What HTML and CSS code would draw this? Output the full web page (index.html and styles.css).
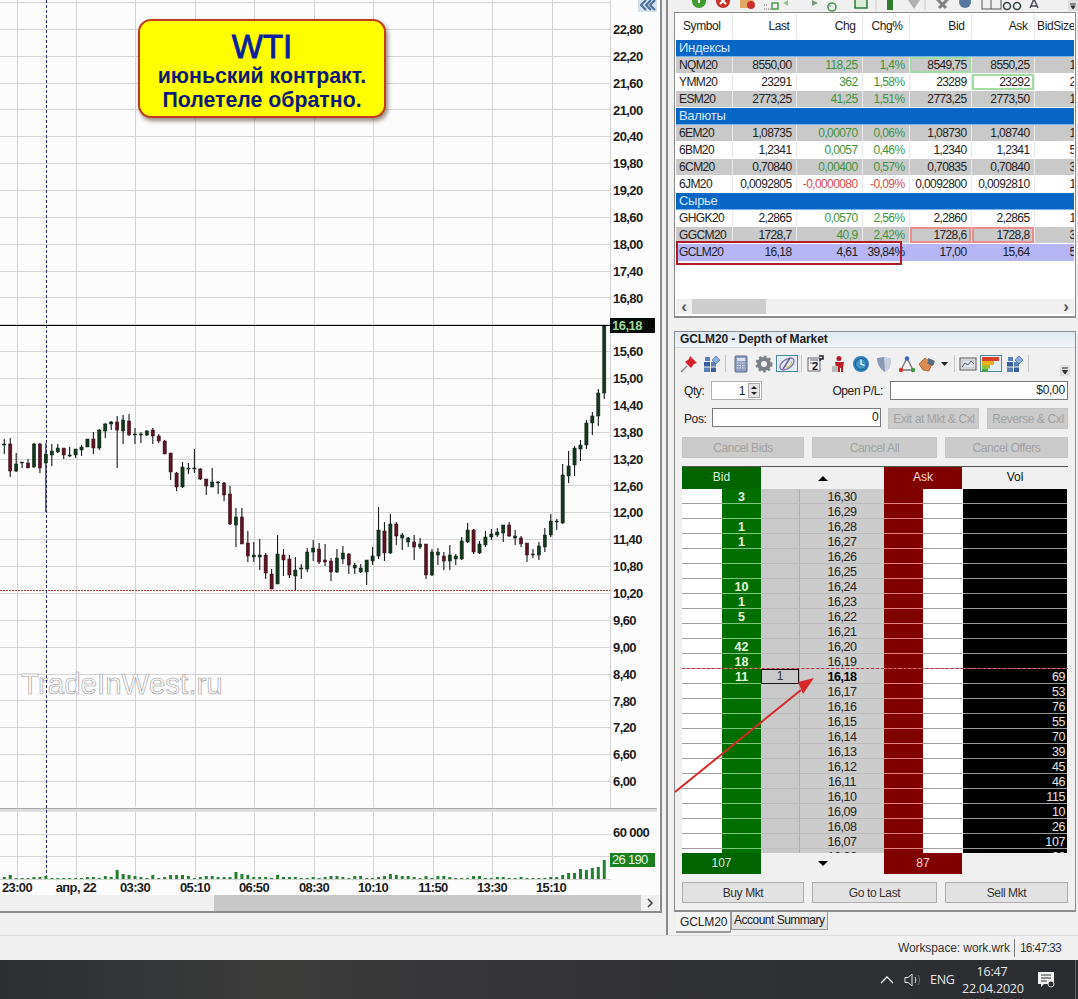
FILE: index.html
```html
<!DOCTYPE html>
<html lang="ru">
<head>
    <meta charset="UTF-8">
    <title>GCLM20 - Depth of Market</title>
    <link rel="stylesheet" href="styles.css">
</head>
<body>

<div class="workspace">

    <!-- chart, drawn by chart.js -->
    <div class="chart-panel">
        <svg id="chart" class="chart" width="659" height="912"></svg>
        <div class="note">
            <div class="note-big">WTI</div>
            <div>июньский контракт.</div>
            <div>Полетеле обратно.</div>
        </div>
        <div class="collapse">
            <svg width="18" height="11" viewBox="0 0 18 11"><path d="M8 0 L3 5 L8 10 M13 0 L8 5 L13 10 M17 0 L12 5 L17 10" fill="none" stroke="#4a6f9c" stroke-width="2"/></svg>
        </div>
    </div>

    <div class="side">

        <svg class="top-tools" width="410" height="12" viewBox="0 0 410 12">
            <circle cx="27" cy="1" r="7" fill="#3f9a2f"/><path d="M27 -3v6" stroke="#fff" stroke-width="2"/>
            <circle cx="51" cy="1" r="7" fill="#c8302a"/><path d="M48 -2l6 6M54 -2l-6 6" stroke="#fff" stroke-width="2"/>
            <rect x="68" y="-3" width="13" height="11" fill="#e0a860"/><circle cx="79" cy="5" r="4" fill="#c8302a"/>
            <path d="M92 9h10M92 5h3" stroke="#666" stroke-dasharray="1 1"/><rect x="100" y="3" width="6" height="6" fill="none" stroke="#4a9a4a" stroke-width="1.5"/>
            <path d="M116 0l-5 3 5 3z" fill="#8fc48f"/>
            <path d="M140 0l6 3-6 3z" fill="#7c9a7c"/>
            <circle cx="160" cy="7" r="4" fill="none" stroke="#4a9a4a" stroke-width="1.6"/><path d="M155 6h4" stroke="#88a"/>
            <rect x="183" y="-1" width="12" height="9" fill="#d8ecd8" stroke="#2a7a3a" stroke-width="1.5"/>
            <path d="M204 0v11" stroke="#c8c8c8"/>
            <rect x="215" y="-2" width="6" height="12" fill="#2f7a2f"/>
            <path d="M236 0h12l-6 9z" fill="#b0b0b0"/>
            <path d="M253 0v11" stroke="#c8c8c8"/>
            <path d="M265 -1l9 9M276 -1l-9 9" stroke="#808080" stroke-width="3"/>
            <circle cx="293" cy="2" r="6" fill="#5878a0"/>
            <rect x="310" y="-2" width="19" height="11" fill="none" stroke="#555"/><path d="M319 -2v11" stroke="#555"/>
            <circle cx="335" cy="6" r="3.5" fill="none" stroke="#344" stroke-width="1.6"/><circle cx="345" cy="6" r="3.5" fill="none" stroke="#344" stroke-width="1.6"/>
            <path d="M358 8l4-9 4 9M359 6h6" fill="none" stroke="#445" stroke-width="1.4"/>
            <rect x="396" y="0" width="10" height="11" fill="#ddd"/><path d="M398 4h6M399 6l2 3 2-3z" stroke="#333" fill="#333"/>
        </svg>

        <div class="quotes">
            <div class="quotes-body">
                <table class="quote-table">
                    <colgroup>
                        <col class="col-sym"><col class="col-last"><col class="col-chg"><col class="col-pct"><col class="col-bid"><col class="col-ask"><col class="col-size">
                    </colgroup>
                    <tr class="head"><th class="left">Symbol</th><th>Last</th><th>Chg</th><th>Chg%</th><th>Bid</th><th>Ask</th><th class="size-head">BidSize</th></tr>
                    <tr class="group"><td colspan="7">Индексы</td></tr>
                    <tr class="odd"><td class="left">NQM20</td><td>8550,00</td><td class="up">118,25</td><td class="up">1,4%</td><td class="hl-green">8549,75</td><td>8550,25</td><td class="size">1</td></tr>
                    <tr><td class="left">YMM20</td><td>23291</td><td class="up">362</td><td class="up">1,58%</td><td>23289</td><td class="hl-green">23292</td><td class="size">2</td></tr>
                    <tr class="odd"><td class="left">ESM20</td><td>2773,25</td><td class="up">41,25</td><td class="up">1,51%</td><td>2773,25</td><td>2773,50</td><td class="size">17</td></tr>
                    <tr class="group"><td colspan="7">Валюты</td></tr>
                    <tr class="odd"><td class="left">6EM20</td><td>1,08735</td><td class="up">0,00070</td><td class="up">0,06%</td><td>1,08730</td><td>1,08740</td><td class="size">10</td></tr>
                    <tr><td class="left">6BM20</td><td>1,2341</td><td class="up">0,0057</td><td class="up">0,46%</td><td>1,2340</td><td>1,2341</td><td class="size">5</td></tr>
                    <tr class="odd"><td class="left">6CM20</td><td>0,70840</td><td class="up">0,00400</td><td class="up">0,57%</td><td>0,70835</td><td>0,70840</td><td class="size">3</td></tr>
                    <tr><td class="left">6JM20</td><td>0,0092805</td><td class="down">-0,0000080</td><td class="down">-0,09%</td><td>0,0092800</td><td>0,0092810</td><td class="size">14</td></tr>
                    <tr class="group"><td colspan="7">Сырье</td></tr>
                    <tr><td class="left">GHGK20</td><td>2,2865</td><td class="up">0,0570</td><td class="up">2,56%</td><td>2,2860</td><td>2,2865</td><td class="size">17</td></tr>
                    <tr class="odd"><td class="left">GGCM20</td><td>1728,7</td><td class="up">40,9</td><td class="up">2,42%</td><td class="hl-red">1728,6</td><td class="hl-red">1728,8</td><td class="size">3</td></tr>
                    <tr class="sel"><td class="left">GCLM20</td><td>16,18</td><td>4,61</td><td>39,84%</td><td>17,00</td><td>15,64</td><td class="size">5</td></tr>
                </table>
                <div class="sel-mark"></div>
                <div class="hscroll">
                    <span class="arrow">‹</span>
                    <div class="hscroll-track"><div class="hscroll-thumb"></div></div>
                    <span class="arrow">›</span>
                </div>
            </div>
        </div>

        <div class="dom">
            <div class="dom-title">GCLM20 - Depth of Market</div>

            <div class="dom-tools">
                <svg class="tool" width="18" height="18" viewBox="0 0 18 18"><path d="M1 17l6-6" stroke="#888" stroke-width="1.5"/><path d="M10 1l7 7-3 1-3 4-6-6 4-3z" fill="#d8222a"/><path d="M11 2l5 5" stroke="#f08080"/></svg>
                <svg class="tool" width="18" height="18" viewBox="0 0 18 18"><use href="#blocks"/></svg>
                <span class="tool-sep"></span>
                <svg class="tool" width="18" height="18" viewBox="0 0 18 18"><rect x="3" y="1" width="12" height="16" rx="1" fill="#8f9fc0" stroke="#5a6a8a"/><rect x="5" y="3" width="8" height="3" fill="#dde"/><path d="M5 8h8M5 10.500h8M5 13h8" stroke="#e8e8f4" stroke-dasharray="1.500 1"/></svg>
                <svg class="tool" width="18" height="18" viewBox="0 0 18 18"><circle cx="9" cy="9" r="5" fill="none" stroke="#7a7f88" stroke-width="4"/><circle cx="9" cy="9" r="7.500" fill="none" stroke="#7a7f88" stroke-width="2" stroke-dasharray="2.500 2.500"/></svg>
                <span class="tool-on"><svg width="18" height="16" viewBox="0 0 18 16"><ellipse cx="9" cy="8" rx="8" ry="4.500" fill="none" stroke="#8a78b8" stroke-width="1.500" transform="rotate(-35 9 8)"/><path d="M5 13L12 2" stroke="#6a58a0" stroke-width="1.500"/><path d="M8 11c3 0 5-2 6-6" fill="none" stroke="#c8b030"/></svg></span>
                <span class="tool-sep tool-sep-tight"></span>
                <svg class="tool" width="18" height="18" viewBox="0 0 18 18"><rect x="2" y="3" width="12" height="13" fill="#f4f4f4" stroke="#667"/><path d="M4 5h8M4 8h8" stroke="#667"/><text class="tool-num" x="6" y="15">2</text><path d="M13 1h4v3h-3v2" fill="none" stroke="#223" stroke-width="1.500"/></svg>
                <svg class="tool" width="18" height="18" viewBox="0 0 18 18"><circle cx="10" cy="3.500" r="2.500" fill="#b02028"/><path d="M6 7h9l-1 6H7z" fill="#b82028"/><path d="M3 11h6v6H3z" fill="#bbb"/><path d="M10 13v4M13 13v4" stroke="#b02028" stroke-width="2"/></svg>
                <svg class="tool" width="18" height="18" viewBox="0 0 18 18"><circle cx="9" cy="9" r="8" fill="#2f7fb8"/><circle cx="9" cy="9" r="5.500" fill="#3f95cc" stroke="#1a5a8a"/><path d="M9 4.500V9l3.500 1.500" fill="none" stroke="#fff" stroke-width="1.300"/></svg>
                <svg class="tool" width="18" height="18" viewBox="0 0 18 18"><path d="M2 3l7-1 7 2c0 6-2 10-6 13C5 14 2 9 2 3z" fill="#8a9ab4"/><path d="M9 2l7 2c0 6-2 10-6 13z" fill="#c6d0de"/></svg>
                <svg class="tool" width="18" height="18" viewBox="0 0 18 18"><path d="M9 3L3 15h12z" fill="none" stroke="#777" stroke-width="1.300"/><circle cx="9" cy="3.500" r="2.200" fill="#3a66c0"/><circle cx="3" cy="15" r="2.200" fill="#d03030"/><circle cx="15" cy="15" r="2.200" fill="#3a9a3a"/></svg>
                <svg class="tool tool-hand" width="18" height="18" viewBox="0 0 18 18"><path d="M1 9l6-6 4 3-2 2 5 1-3 7-6-1z" fill="#d88a50" stroke="#a05020" stroke-width=".7"/><path d="M10 3l7 3-2 5-5-2z" fill="#5a6a80"/></svg>
                <svg class="tool-caret" width="7" height="4" viewBox="0 0 7 4"><path d="M0 0h7L3.500 4z" fill="#222"/></svg>
                <span class="tool-sep tool-sep-tight"></span>
                <svg class="tool" width="18" height="18" viewBox="0 0 18 18"><rect x="1" y="3" width="16" height="12" fill="#eee" stroke="#555"/><rect x="3" y="5" width="12" height="8" fill="#dfe4ee" stroke="#999" stroke-width=".5"/><path d="M3 12l3-4 3 2 3-4 3 3" fill="none" stroke="#555"/></svg>
                <span class="tool-on"><svg width="18" height="16" viewBox="0 0 18 16"><rect x="0" y="1" width="17" height="4" fill="#d8402a"/><rect x="0" y="5" width="12" height="4" fill="#e8b020"/><rect x="0" y="9" width="8" height="3.500" fill="#9ac030"/><rect x="0" y="12.500" width="6" height="3" fill="#48a838"/></svg></span>
                <svg class="tool" width="18" height="18" viewBox="0 0 18 18" id="last-blocks">
                    <defs>
                        <g id="blocks">
                            <rect x="1" y="7" width="6" height="4.500" fill="#3a5e9c"/><rect x="8" y="7" width="5" height="4.500" fill="#5a80b8"/>
                            <rect x="1" y="12.500" width="6" height="4.500" fill="#5a80b8"/><rect x="8" y="12.500" width="5" height="4.500" fill="#3a5e9c"/>
                            <rect x="2" y="2" width="5" height="4" fill="#5a80b8"/>
                            <path d="M13 1l4 4-4 4-4-4z" fill="#8ab0e0" stroke="#39598c" stroke-width=".6"/>
                        </g>
                    </defs>
                    <use href="#blocks"/>
                </svg>
                <span class="tool-sep"></span>
                <span class="tool-more"><svg width="10" height="11" viewBox="0 0 10 11"><path d="M2 3h6M2.500 5.500L5 9l2.500-3.500z" stroke="#333" fill="#333"/></svg></span>
            </div>

            <div class="form-row row-qty">
                <label class="lbl">Qty:</label>
                <div class="spin">
                    <span class="spin-val">1</span>
                    <span class="spin-btns"><i class="tri-up"></i><i class="tri-down"></i></span>
                </div>
                <label class="lbl lbl-pl">Open P/L:</label>
                <div class="field field-pl">$0,00</div>
            </div>

            <div class="form-row row-pos">
                <label class="lbl lbl-pos">Pos:</label>
                <div class="field field-pos">0</div>
                <button class="btn off btn-exit">Exit at Mkt &amp; Cxl</button>
                <button class="btn off btn-rev">Reverse &amp; Cxl</button>
            </div>

            <div class="btn-row row-cancel">
                <button class="btn off">Cancel Bids</button>
                <button class="btn off">Cancel All</button>
                <button class="btn off">Cancel Offers</button>
            </div>

            <div class="ladder">
                <div class="ladder-line ladder-head">
                    <span class="h-bid">Bid</span>
                    <span class="h-mid"><i class="big-up"></i></span>
                    <span class="h-ask">Ask</span>
                    <span class="h-vol">Vol</span>
                </div>
                <div class="ladder-rows">
                    <div class="lr"><span class="bw"></span><span class="bq">3</span><span class="my"></span><span class="pr">16,30</span><span class="aq"></span><span class="aw"></span><span class="vo"></span></div>
                    <div class="lr"><span class="bw"></span><span class="bq"></span><span class="my"></span><span class="pr">16,29</span><span class="aq"></span><span class="aw"></span><span class="vo"></span></div>
                    <div class="lr"><span class="bw"></span><span class="bq">1</span><span class="my"></span><span class="pr">16,28</span><span class="aq"></span><span class="aw"></span><span class="vo"></span></div>
                    <div class="lr"><span class="bw"></span><span class="bq">1</span><span class="my"></span><span class="pr">16,27</span><span class="aq"></span><span class="aw"></span><span class="vo"></span></div>
                    <div class="lr"><span class="bw"></span><span class="bq"></span><span class="my"></span><span class="pr">16,26</span><span class="aq"></span><span class="aw"></span><span class="vo"></span></div>
                    <div class="lr"><span class="bw"></span><span class="bq"></span><span class="my"></span><span class="pr">16,25</span><span class="aq"></span><span class="aw"></span><span class="vo"></span></div>
                    <div class="lr"><span class="bw"></span><span class="bq">10</span><span class="my"></span><span class="pr">16,24</span><span class="aq"></span><span class="aw"></span><span class="vo"></span></div>
                    <div class="lr"><span class="bw"></span><span class="bq">1</span><span class="my"></span><span class="pr">16,23</span><span class="aq"></span><span class="aw"></span><span class="vo"></span></div>
                    <div class="lr"><span class="bw"></span><span class="bq">5</span><span class="my"></span><span class="pr">16,22</span><span class="aq"></span><span class="aw"></span><span class="vo"></span></div>
                    <div class="lr"><span class="bw"></span><span class="bq"></span><span class="my"></span><span class="pr">16,21</span><span class="aq"></span><span class="aw"></span><span class="vo"></span></div>
                    <div class="lr"><span class="bw"></span><span class="bq">42</span><span class="my"></span><span class="pr">16,20</span><span class="aq"></span><span class="aw"></span><span class="vo"></span></div>
                    <div class="lr"><span class="bw"></span><span class="bq">18</span><span class="my"></span><span class="pr">16,19</span><span class="aq"></span><span class="aw"></span><span class="vo"></span></div>
                    <div class="lr lr-last"><span class="bw"></span><span class="bq">11</span><span class="my my-box">1</span><span class="pr">16,18</span><span class="aq"></span><span class="aw"></span><span class="vo">69</span></div>
                    <div class="lr"><span class="bw"></span><span class="bq"></span><span class="my"></span><span class="pr">16,17</span><span class="aq"></span><span class="aw"></span><span class="vo">53</span></div>
                    <div class="lr"><span class="bw"></span><span class="bq"></span><span class="my"></span><span class="pr">16,16</span><span class="aq"></span><span class="aw"></span><span class="vo">76</span></div>
                    <div class="lr"><span class="bw"></span><span class="bq"></span><span class="my"></span><span class="pr">16,15</span><span class="aq"></span><span class="aw"></span><span class="vo">55</span></div>
                    <div class="lr"><span class="bw"></span><span class="bq"></span><span class="my"></span><span class="pr">16,14</span><span class="aq"></span><span class="aw"></span><span class="vo">70</span></div>
                    <div class="lr"><span class="bw"></span><span class="bq"></span><span class="my"></span><span class="pr">16,13</span><span class="aq"></span><span class="aw"></span><span class="vo">39</span></div>
                    <div class="lr"><span class="bw"></span><span class="bq"></span><span class="my"></span><span class="pr">16,12</span><span class="aq"></span><span class="aw"></span><span class="vo">45</span></div>
                    <div class="lr"><span class="bw"></span><span class="bq"></span><span class="my"></span><span class="pr">16,11</span><span class="aq"></span><span class="aw"></span><span class="vo">46</span></div>
                    <div class="lr"><span class="bw"></span><span class="bq"></span><span class="my"></span><span class="pr">16,10</span><span class="aq"></span><span class="aw"></span><span class="vo">115</span></div>
                    <div class="lr"><span class="bw"></span><span class="bq"></span><span class="my"></span><span class="pr">16,09</span><span class="aq"></span><span class="aw"></span><span class="vo">10</span></div>
                    <div class="lr"><span class="bw"></span><span class="bq"></span><span class="my"></span><span class="pr">16,08</span><span class="aq"></span><span class="aw"></span><span class="vo">26</span></div>
                    <div class="lr"><span class="bw"></span><span class="bq"></span><span class="my"></span><span class="pr">16,07</span><span class="aq"></span><span class="aw"></span><span class="vo">107</span></div>
                    <div class="lr"><span class="bw"></span><span class="bq"></span><span class="my"></span><span class="pr">16,06</span><span class="aq"></span><span class="aw"></span><span class="vo">98</span></div>
                </div>
                <div class="ladder-line ladder-foot">
                    <span class="h-bid">107</span>
                    <span class="h-mid"><i class="big-down"></i></span>
                    <span class="h-ask">87</span>
                    <span class="h-vol"></span>
                </div>
            </div>

            <div class="btn-row row-trade">
                <button class="btn">Buy Mkt</button>
                <button class="btn">Go to Last</button>
                <button class="btn">Sell Mkt</button>
            </div>
        </div>

        <div class="tabs">
            <span class="tab tab-on">GCLM20</span>
            <span class="tab">Account Summary</span>
        </div>
    </div>
</div>

<div class="statusbar">
    <span class="status-work">Workspace: work.wrk</span>
    <span class="status-time">16:47:33</span>
</div>

<div class="taskbar">
    <svg class="tray-up" width="14" height="8" viewBox="0 0 14 8"><path d="M1 7l6-6 6 6" fill="none" stroke="#fff" stroke-width="1.300"/></svg>
    <svg class="tray-vol" width="18" height="16" viewBox="0 0 18 16"><path d="M1 5.500h3L8 2v12L4 10.500H1z" fill="none" stroke="#eee"/><path d="M11 5c1 2 1 4 0 6" fill="none" stroke="#eee"/><path d="M14 3c2 3 2 7 0 10" fill="none" stroke="#777"/></svg>
    <span class="tray-lang">ENG</span>
    <div class="tray-clock"><div>16:47</div><div>22.04.2020</div></div>
    <svg class="tray-note" width="18" height="17" viewBox="0 0 18 17"><path d="M1 1h16v12H7l-3 3v-3H1z" fill="#f4f4f4"/><path d="M4 4h10M4 7h10M4 10h6" stroke="#333"/><circle cx="14" cy="13" r="3" fill="#2d2d2f" stroke="#ddd"/></svg>
    <span class="tray-edge"></span>
</div>

<!-- red arrow drawn over the ladder -->
<svg class="pointer" width="160" height="130" viewBox="0 0 160 130">
    <path d="M5 122L131 20" stroke="#d62a2a" stroke-width="2"/>
    <path d="M144 8L128 12L133 24z" fill="#d62a2a"/>
</svg>

<script src="chart.js"></script>
</body>
</html>
```

FILE: styles.css
```css
/* General */
* {
    box-sizing: border-box;
}

body {
    margin: 0;
    width: 1078px;
    height: 999px;
    overflow: hidden;
    position: relative;
    display: flex;
    flex-direction: column;
    font-family: "Liberation Sans", Arial, sans-serif;
    font-size: 12px;
    color: #222;
    background-color: #f0f0f0;
}

.workspace {
    display: flex;
    height: 936px;
    border-bottom: 1px solid #dcdcdc;
}

/* Chart */
.chart-panel {
    position: relative;
    width: 662px;
    height: 913px;
    border-right: 2px solid #8a8a8a;
    border-bottom: 2px solid #8a8a8a;
    background-color: #fcfcfc;
}

.chart {
    display: block;
}

.chart .grid {
    stroke: #d4d4d4;
    stroke-width: 1;
}

.chart .wick {
    stroke: #14181a;
    stroke-width: 1.1;
}

.chart .up {
    fill: #12381c;
    stroke: #0c2012;
    stroke-width: .5;
}

.chart .down {
    fill: #5c1420;
    stroke: #30101a;
    stroke-width: .5;
}

.chart .vol {
    fill: #22802e;
}

.chart .axis {
    font-size: 13px;
    font-weight: bold;
    letter-spacing: -.6px;
    fill: #1c1c1c;
}

.chart .tag-text {
    font-weight: bold;
    font-size: 13px;
    letter-spacing: -.5px;
    fill: #9ad89a;
}

.chart .vol-text {
    font-size: 13px;
    letter-spacing: -.7px;
    fill: #e8f8e8;
}

.chart .mark {
    font-size: 29.500px;
    fill: #fcfcfc;
    stroke: #9a9a9a;
    stroke-width: .6;
}

.note {
    position: absolute;
    left: 138px;
    top: 19px;
    width: 248px;
    height: 99px;
    padding-top: 9px;
    border: 2px solid #c23a1c;
    border-radius: 13px;
    background-color: #ffff00;
    box-shadow: 2px 3px 4px rgba(80, 60, 40, .6);
    text-align: center;
    font-size: 21.300px;
    line-height: 24px;
    font-weight: bold;
    color: #0c1a78;
}

.note-big {
    font-size: 33px;
    line-height: 34px;
    font-weight: normal;
    -webkit-text-stroke: .9px #0a1fa0;
    color: #0a1fa0;
}

.collapse {
    position: absolute;
    left: 638px;
    top: 0;
    width: 19px;
    height: 12px;
    background-color: #d4e0ee;
}

/* Right side */
.side {
    width: 412px;
    margin-left: 4px;
    padding-left: 6px;
    border-left: 2px solid #8a8a8a;
    display: flex;
    flex-direction: column;
}

.top-tools {
    display: block;
    flex: none;
    margin-left: -2px;
}

.quotes {
    width: 402px;
    height: 306px;
    padding: 1px;
    border: 1px solid #8c8c8c;
    border-bottom-width: 2px;
    background-color: #fff;
}

.quotes-body {
    position: relative;
    height: 100%;
    display: flex;
    flex-direction: column;
    justify-content: space-between;
    overflow: hidden;
}

.quote-table {
    table-layout: fixed;
    width: 399px;
    border-collapse: collapse;
    font-size: 12px;
    letter-spacing: -.6px;
}

.col-sym { width: 56px; }
.col-last { width: 64px; }
.col-chg { width: 66px; }
.col-pct { width: 47px; }
.col-bid { width: 62px; }
.col-ask { width: 63px; }
.col-size { width: 41px; }

.quote-table td,
.quote-table th {
    height: 17px;
    padding: 0 4px 0 3px;
    text-align: right;
    white-space: nowrap;
    overflow: hidden;
    font-weight: normal;
    border-right: 1px solid #e8e8e8;
    border-bottom: 1px solid #fff;
}

.quote-table th {
    height: 25px;
    padding-right: 6px;
    font-size: 12px;
    letter-spacing: -.4px;
    background-color: #fff;
    border-right: 1px solid #e6e6e6;
}

.quote-table .left {
    text-align: left;
}

.quote-table th.left {
    padding-left: 7px;
}

.quote-table .size-head {
    padding: 0;
    border-right: none;
}

.quote-table .size {
    padding: 0 0 0 35px;
    text-align: left;
}

.quote-table .group td {
    text-align: left;
    font-size: 13px;
    letter-spacing: -.3px;
    color: #d4e8ff;
    background-color: #0866c6;
    border-right: none;
    border-bottom: 1px solid #7ab4ea;
}

.quote-table .odd td {
    background-color: #c9c9c9;
}

.quote-table .up {
    color: #3c9440;
}

.quote-table .down {
    color: #d84848;
}

.quote-table .sel td {
    background-color: #b6b6f6;
    border-color: #b6b6f6;
}

.quote-table td.hl-green {
    box-shadow: inset 0 0 0 2px #a2dca2;
}

.quote-table td.hl-red {
    box-shadow: inset 0 0 0 2px #e88c8c;
}

.sel-mark {
    position: absolute;
    left: 0;
    top: 227px;
    width: 226px;
    height: 24px;
    border: 2px solid #b01c28;
}

.hscroll {
    display: flex;
    align-items: center;
    height: 15px;
    margin-bottom: 1px;
    background-color: #f0f0f0;
    color: #555;
}

.arrow {
    width: 16px;
    text-align: center;
    font-size: 17px;
    line-height: 13px;
    font-weight: bold;
}

.hscroll-track {
    flex: 1;
    height: 100%;
}

.hscroll-thumb {
    width: 74px;
    height: 100%;
    background-color: #cdcdcd;
}

/* Depth of market */
.dom {
    width: 402px;
    height: 581px;
    margin-top: 13px;
    border: 1px solid #8c8c8c;
    border-bottom-width: 2px;
    background-color: #f0f0f0;
}

.dom-title {
    height: 16px;
    padding-left: 5px;
    font-weight: bold;
    font-size: 12px;
    letter-spacing: -.1px;
    line-height: 15px;
    background: linear-gradient(to bottom, #e0eaf2, #f0f4f8);
    border-bottom: 1px solid #d0d8e0;
}

.dom-tools {
    display: flex;
    align-items: center;
    height: 25px;
    margin-top: 3px;
    padding-left: 5px;
    position: relative;
}

.tool {
    flex: none;
    width: 18px;
    margin-right: 5px;
}

.tool-num {
    font-size: 11px;
    font-weight: bold;
    fill: #223;
}

.tool-sep {
    flex: none;
    width: 1px;
    height: 17px;
    margin: 0 6px 0 -1px;
    background-color: #c4c4c4;
}

.tool-sep-tight {
    margin-right: 4px;
}

.tool-hand {
    margin-left: -3px;
    margin-right: 7px;
}

.tool-on {
    flex: none;
    display: flex;
    align-items: center;
    justify-content: center;
    width: 22px;
    height: 17px;
    margin: 0 4px 0 -2px;
    border: 1px solid #4a8a9a;
    background-color: #e4eef2;
}

.tool-caret {
    flex: none;
    margin: 0 7px 0 -2px;
}

.tool-more {
    position: absolute;
    right: 5px;
    bottom: 0;
    width: 10px;
    height: 11px;
    background-color: #e0e0e0;
}

.form-row {
    display: flex;
    align-items: center;
    height: 19px;
    padding-left: 9px;
}

.row-qty {
    margin-top: 5px;
}

.row-pos {
    margin-top: 8px;
    height: 21px;
}

.lbl {
    color: #222;
    font-size: 12px;
    letter-spacing: -.4px;
}

.spin {
    display: flex;
    justify-content: flex-end;
    align-items: center;
    width: 51px;
    height: 19px;
    margin-left: 7px;
    padding-right: 1px;
    border: 1px solid #b0b0b0;
    background-color: #fff;
}

.spin-val {
    margin-right: 3px;
}

.spin-btns {
    display: flex;
    flex-direction: column;
    width: 12px;
    height: 15px;
    background-color: #e4e4e4;
    border: 1px solid #aaa;
    align-items: center;
    justify-content: space-around;
}

.tri-up {
    border: 3px solid transparent;
    border-top: 0;
    border-bottom: 3px solid #222;
}

.tri-down {
    border: 3px solid transparent;
    border-bottom: 0;
    border-top: 3px solid #222;
}

.lbl-pl {
    margin-left: 70px;
}

.field {
    height: 19px;
    padding-right: 2px;
    text-align: right;
    line-height: 16px;
    font-size: 12px;
    letter-spacing: -.3px;
    border: 1px solid #7a7a7a;
    background-color: #fff;
}

.field-pl {
    width: 178px;
    margin-left: 7px;
}

.field-pos {
    width: 169px;
    margin: -2px 0 0 6px;
}

.btn {
    height: 21px;
    padding: 0;
    font-family: inherit;
    font-size: 12px;
    letter-spacing: -.4px;
    color: #333;
    background-color: #e2e2e2;
    border: 1px solid #adadad;
}

.btn.off {
    color: #a2a2a2;
    background-color: #cbcbcb;
    border-color: #c4c4c4;
}

.btn-exit {
    width: 91px;
    margin-left: 7px;
}

.btn-rev {
    width: 81px;
    margin-left: 8px;
}

.btn-row {
    display: grid;
    grid-template-columns: 122px 125px 123px;
    column-gap: 8px;
    padding-left: 7px;
}

.row-cancel {
    margin-top: 8px;
}

.row-trade {
    margin-top: 8px;
}

.ladder {
    width: 386px;
    margin: 8px 0 0 7px;
    border-top: 1px solid #555;
}

.ladder-line {
    display: grid;
    grid-template-columns: 79px 123px 78px 106px;
    height: 21px;
    text-align: center;
    line-height: 21px;
}

.ladder-head {
    height: 22px;
}

.h-bid {
    background-color: #006400;
    color: #d8f0d8;
}

.h-ask {
    background-color: #800000;
    color: #f4d8d8;
}

.h-vol {
    color: #111;
}

.ladder-foot .h-vol {
    background-color: #f0f0f0;
}

.h-mid {
    display: flex;
    align-items: center;
    justify-content: center;
}

.big-up {
    border: 5px solid transparent;
    border-top: 0;
    border-bottom: 5px solid #000;
}

.big-down {
    border: 5px solid transparent;
    border-bottom: 0;
    border-top: 5px solid #000;
}

.ladder-rows {
    height: 364px;
    overflow: hidden;
}

.lr {
    position: relative;
    display: grid;
    grid-template-columns: 40px 39px 38px 85px 39px 39px 105px;
    grid-template-rows: 15px;
    height: 15px;
    text-align: center;
}

.lr span {
    padding-top: 1px;
    line-height: 14px;
    border-bottom: 1px solid #a0a0a0;
}

.bw,
.aw {
    background-color: #fff;
}

.lr .bq {
    background-color: #006f00;
    border-bottom-color: #80c880;
    font-weight: bold;
    font-size: 12.500px;
    color: #e4f8d8;
}

.lr .my {
    background-color: #c9c9c9;
    border-bottom-color: #bcbcbc;
    color: #333;
}

.lr .my-box {
    padding-top: 0;
    border: 1px solid #111;
    line-height: 13px;
}

.lr .pr {
    background-color: #cccccc;
    border-left: 1px solid #aeaeae;
    border-bottom-color: #bcbcbc;
    font-size: 12.500px;
    letter-spacing: -.5px;
    color: #222;
}

.lr-last .pr {
    font-weight: bold;
    color: #000;
}

.lr .aq {
    background-color: #800000;
    border-bottom-color: #e08080;
}

.lr .vo {
    margin-left: 1px;
    padding-right: 2px;
    background-color: #000;
    border-bottom-color: #9a9a9a;
    text-align: right;
    font-size: 12.500px;
    letter-spacing: -.4px;
    color: #e4e4e4;
}

.lr-last::before {
    content: "";
    position: absolute;
    left: 0;
    right: 0;
    top: -1px;
    border-top: 1px dashed #c03040;
    z-index: 1;
}

/* Tabs and status */
.tabs {
    display: flex;
    align-items: flex-start;
    height: 23px;
    padding-left: 2px;
}

.tab {
    height: 18px;
    margin-left: 0;
    padding: 0 2px;
    line-height: 17px;
    font-size: 12px;
    letter-spacing: -.5px;
    color: #222;
    background: linear-gradient(to bottom, #f0f0f0, #dcdcdc);
    border: 1px solid #9a9a9a;
    border-top: 0;
}

.tab-on {
    height: 21px;
    width: 55px;
    margin: 0;
    padding: 2px 0 0 4px;
    letter-spacing: -.1px;
    background: #f4f4f4;
    border-left: 0;
    border-right-color: #9a9a9a;
    border-bottom: 2px solid #9a9a9a;
}

.statusbar {
    display: flex;
    justify-content: flex-end;
    align-items: center;
    height: 24px;
    padding-right: 17px;
    font-size: 12px;
    background-color: #f0f0f0;
    color: #333;
}

.status-work {
    letter-spacing: -.1px;
}

.status-time {
    margin-left: 4px;
    padding-left: 5px;
    line-height: 18px;
    letter-spacing: -.7px;
    border-left: 1px solid #777;
}

.taskbar {
    display: flex;
    align-items: center;
    height: 39px;
    background: linear-gradient(to right, #2c2e32 0, #3c3c3b 25%, #343438 50%, #2a2c30 100%);
    color: #e8e8e8;
    font-family: "Open Sans", "Liberation Sans", sans-serif;
    font-size: 12.500px;
}

.taskbar svg {
    flex: none;
}

.tray-up {
    margin-left: 880px;
}

.tray-vol {
    margin-left: 10px;
}

.tray-lang {
    width: 24px;
    margin-left: 8px;
    letter-spacing: -.3px;
}

.tray-clock {
    width: 60px;
    margin-left: 8px;
    text-align: center;
    line-height: 17px;
    letter-spacing: -.2px;
}

.tray-note {
    margin-left: 15px;
}

.tray-edge {
    width: 1px;
    height: 39px;
    margin-left: 20px;
    background-color: #666;
}

.pointer {
    position: absolute;
    left: 670px;
    top: 670px;
    pointer-events: none;
}
```

FILE: chart.js
```js
// [high, low, bodyTop, bodyBottom, color] in chart pixels
const candles = [
    [439,454,444,445,'g'],[438,477,444,471,'r'],[453,472,464,471,'g'],[462,468,462,463,'g'],[459,468,463,468,'r'],
    [443,468,444,467,'g'],[443,473,444,468,'r'],[443,512,454,463,'g'],[444,466,451,455,'g'],[444,453,448,452,'g'],
    [448,459,448,455,'r'],[447,457,455,456,'g'],[449,458,449,455,'g'],[445,456,447,450,'g'],[439,447,439,447,'g'],
    [432,454,439,448,'r'],[429,450,430,448,'g'],[423,438,424,431,'g'],[421,430,422,424,'g'],[416,468,422,430,'r'],
    [415,444,420,431,'g'],[414,436,421,435,'r'],[428,444,434,435,'g'],[432,443,434,435,'g'],[430,436,431,435,'g'],
    [428,444,430,436,'r'],[434,443,436,441,'r'],[440,454,441,454,'r'],[453,480,453,472,'r'],[472,491,473,487,'r'],
    [462,488,467,487,'g'],[463,474,468,469,'g'],[449,473,468,469,'g'],[468,480,469,479,'r'],[479,495,479,486,'r'],
    [468,487,482,487,'g'],[481,494,482,483,'g'],[482,501,483,495,'r'],[486,525,494,524,'r'],[508,547,517,525,'g'],
    [508,544,517,544,'r'],[531,562,543,556,'r'],[542,562,555,557,'g'],[539,570,555,557,'g'],[553,579,555,573,'r'],
    [569,589,574,589,'r'],[535,584,554,584,'g'],[549,576,555,560,'r'],[555,578,559,575,'r'],[557,590,570,576,'g'],
    [564,579,568,569,'g'],[548,572,552,569,'g'],[540,561,548,552,'g'],[543,564,549,562,'r'],[544,566,560,562,'r'],
    [558,581,561,572,'r'],[549,573,558,572,'g'],[546,564,553,559,'g'],[553,574,554,565,'r'],[563,574,565,568,'g'],
    [564,573,568,572,'g'],[560,585,560,572,'g'],[547,565,556,561,'g'],[507,559,530,556,'g'],[522,561,531,553,'r'],
    [514,554,524,553,'g'],[522,545,524,536,'r'],[533,550,535,538,'g'],[537,547,538,542,'g'],[535,560,542,547,'r'],
    [538,549,544,547,'g'],[544,579,544,575,'r'],[549,576,552,575,'g'],[548,565,552,555,'g'],[552,570,556,561,'r'],
    [545,570,555,561,'g'],[554,565,556,559,'g'],[537,560,541,559,'g'],[523,543,530,542,'g'],[529,554,530,552,'r'],
    [541,554,544,553,'g'],[531,547,537,545,'g'],[529,540,534,537,'g'],[528,537,532,535,'g'],[525,542,525,533,'g'],
    [522,537,525,536,'r'],[530,545,536,538,'g'],[536,547,538,544,'r'],[543,562,543,555,'r'],[549,558,554,555,'g'],
    [542,560,546,555,'g'],[528,552,535,547,'g'],[514,537,521,535,'g'],[519,530,521,522,'g'],[464,524,475,523,'g'],
    [451,483,466,476,'g'],[446,476,448,465,'g'],[440,461,445,449,'g'],[420,449,423,445,'g'],[412,435,416,423,'g'],
    [389,426,393,416,'g'],[326,399,326,393,'g']
];

const volumes = [
    2,4,1,1,1,2,2,3,1,1,1,1,1,1,2,2,1,3,2,9,5,4,3,2,1,4,1,2,4,4,4,3,1,2,3,3,2,2,2,7,5,4,2,2,2,1,4,2,2,2,1,1,2,
    1,2,3,3,2,1,3,3,1,1,2,3,5,4,3,3,2,1,3,1,3,3,2,1,1,1,3,3,1,1,2,2,1,1,2,1,1,1,1,2,2,4,6,6,10,9,11,12,19
];

const priceLabels = ['22,80','22,20','21,60','21,00','20,40','19,80','19,20','18,60','18,00','17,40','16,80',null,
    '15,60','15,00','14,40','13,80','13,20','12,60','12,00','11,40','10,80','10,20','9,60','9,00','8,40','7,80','7,20','6,60','6,00'];

const timeLabels = [['23:00',17],['апр, 22',76],['03:30',135],['05:10',195],['06:50',254],['08:30',314],
    ['10:10',373],['11:50',433],['13:30',492],['15:10',551]];

const svg = document.getElementById('chart');
const NS = 'http://www.w3.org/2000/svg';

function add(tag, attrs, text) {
    const el = document.createElementNS(NS, tag);
    for (const k in attrs) el.setAttribute(k, attrs[k]);
    if (text) el.textContent = text;
    svg.appendChild(el);
    return el;
}

function line(x1, y1, x2, y2, cls, extra) {
    return add('line', Object.assign({ x1, y1, x2, y2, class: cls }, extra || {}));
}

// grid
for (let k = 0; k < 30; k++) {
    const y = Math.round(2 + 26.86 * k) + 0.5;
    if (y < 806) line(0, y, 611, y, 'grid');
}
for (let x = 16.5; x < 600; x += 59.45) {
    const px = Math.round(x) + 0.5;
    line(px, 0, px, 807, 'grid');
    line(px, 812, px, 879, 'grid');
}
line(610.5, 0, 610.5, 808, 'grid');
[834.5, 856.5, 879.5].forEach(y => line(0, y, 611, y, 'grid'));

// pane divider
add('rect', { x: 0, y: 808, width: 657, height: 4, fill: '#dcdcdc' });
line(0, 808.5, 657, 808.5, 'grid', { style: 'stroke:#a8a8a8' });

// watermark sits under the candles
add('text', { x: 21, y: 694, class: 'mark' }, 'TradeInWest.ru');

// level lines
line(0, 590.5, 610, 590.5, '', { stroke: '#b83030', 'stroke-dasharray': '2 1' });
line(46.5, 0, 46.5, 879, '', { stroke: '#2a2a90', 'stroke-dasharray': '3 2' });

// candles
candles.forEach((c, i) => {
    const x = 4.3 + 5.94 * i;
    line(x, c[0], x, c[1], 'wick');
    add('rect', { x: x - 1.6, y: c[2], width: 3.2, height: Math.max(c[3] - c[2], 1), class: c[4] === 'g' ? 'up' : 'down' });
    add('rect', { x: x - 1.5, y: 879 - volumes[i], width: 3, height: volumes[i], class: 'vol' });
});

line(0, 325.5, 610, 325.5, '', { stroke: '#000' });

// price axis
priceLabels.forEach((t, k) => {
    if (t) add('text', { x: 613, y: Math.round(29 + 26.86 * k) + 4.5, class: 'axis' }, t);
});
add('rect', { x: 610, y: 318, width: 45, height: 15, fill: '#060a06' });
add('text', { x: 612, y: 330, class: 'tag-text' }, '16,18');

// volume axis
add('text', { x: 613, y: 837, class: 'axis' }, '60 000');
add('rect', { x: 610, y: 853, width: 45, height: 14, fill: '#1a8020' });
add('text', { x: 612, y: 864, class: 'vol-text' }, '26 190');

// time axis
timeLabels.forEach(t => {
    add('text', { x: t[1], y: 892, 'text-anchor': 'middle', class: 'axis' }, t[0]);
});

// bottom scrollbar
add('rect', { x: 0, y: 895, width: 659, height: 16, fill: '#f0f0f0' });
add('rect', { x: 214, y: 895, width: 427, height: 16, fill: '#c8c8c8' });
add('path', { d: 'M648 899l4 4-4 4', fill: 'none', stroke: '#444', 'stroke-width': 1.6 });
```
